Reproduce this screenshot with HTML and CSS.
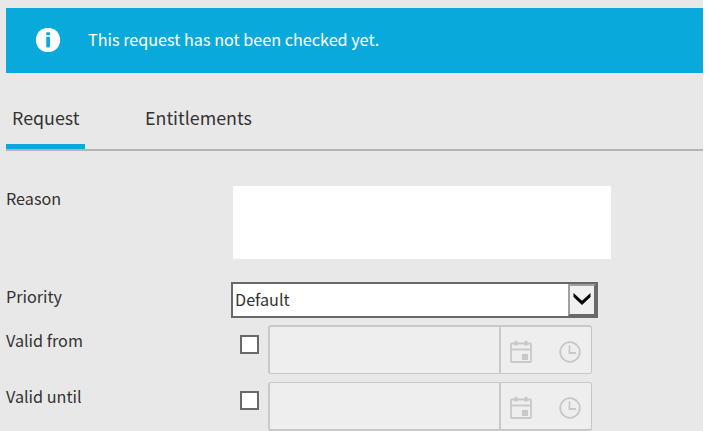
FILE: index.html
```
<!DOCTYPE html>
<html lang="en">
<head>
  <meta charset="UTF-8">
  <meta name="viewport" content="width=device-width, initial-scale=1.0">
  <title>Request</title>
  <link rel="stylesheet" href="styles.css">
</head>
<body>
  <div class="panel">
    <div class="banner">
      <svg class="banner-icon" viewBox="0 0 24 24">
        <circle cx="12" cy="12" r="12.2" fill="#fff"/>
        <rect x="10.2" y="4.2" width="3.8" height="3" rx="0.8" fill="#09a9dc"/>
        <rect x="10.2" y="8.8" width="3.8" height="10.6" rx="0.8" fill="#09a9dc"/>
      </svg>
      <span class="banner-text">This request has not been checked yet.</span>
    </div>

    <div class="tabs">
      <div class="tab active">Request</div>
      <div class="tab">Entitlements</div>
    </div>

    <div class="form">
      <div class="row row-reason">
        <label class="label" for="reason">Reason</label>
        <textarea id="reason" class="reason"></textarea>
      </div>

      <div class="row row-priority">
        <span class="label">Priority</span>
        <div class="select">
          <span class="select-value">Default</span>
          <span class="select-button">
            <svg class="select-arrow" viewBox="0 0 18 12">
              <path d="M0.5 0V4L9 11.9L17.5 4V0L9 7.7Z"/>
            </svg>
          </span>
        </div>
      </div>

      <div class="row row-from">
        <label class="label" for="validFrom">Valid from</label>
        <input type="checkbox" id="validFrom" class="check">
        <div class="datetime">
          <div class="date-value"></div>
          <div class="pickers">
            <svg class="icon" viewBox="0 0 22 22">
              <rect x="1" y="2.5" width="20" height="18.5" rx="1"/>
              <path d="M1 8.5H21"/>
              <path class="rings" d="M6 0V4.5M16 0V4.5"/>
              <rect class="solid" x="12" y="13" width="6" height="6"/>
            </svg>
            <svg class="icon" viewBox="0 0 22 22">
              <circle cx="11" cy="11" r="9.8"/>
              <path d="M10.5 4.5V12H17"/>
            </svg>
          </div>
        </div>
      </div>

      <div class="row row-until">
        <label class="label" for="validUntil">Valid until</label>
        <input type="checkbox" id="validUntil" class="check">
        <div class="datetime">
          <div class="date-value"></div>
          <div class="pickers">
            <svg class="icon" viewBox="0 0 22 22">
              <rect x="1" y="2.5" width="20" height="18.5" rx="1"/>
              <path d="M1 8.5H21"/>
              <path class="rings" d="M6 0V4.5M16 0V4.5"/>
              <rect class="solid" x="12" y="13" width="6" height="6"/>
            </svg>
            <svg class="icon" viewBox="0 0 22 22">
              <circle cx="11" cy="11" r="9.8"/>
              <path d="M10.5 4.5V12H17"/>
            </svg>
          </div>
        </div>
      </div>
    </div>
  </div>
</body>
</html>
```
FILE: styles.css
```
* {
  box-sizing: border-box;
}

body {
  margin: 0;
  background: #fff;
  color: #333;
  font-family: "Noto Sans CJK SC", "Noto Sans", sans-serif;
  font-size: 16.2px;
  line-height: 24px;
  overflow: hidden;
}

.panel {
  width: 703px;
  height: 431px;
  padding: 8px 0 0 6px;
  background: #e8e8e8;
  overflow: hidden;
}

.banner {
  display: flex;
  align-items: center;
  gap: 28px;
  height: 65px;
  padding: 0 0 2px 30px;
  background: #09a9dc;
  color: #fff;
}

.banner-icon {
  width: 24px;
  height: 24px;
}

.banner-text {
  padding-bottom: 1px;
}

.tabs {
  display: flex;
  gap: 54px;
  height: 78px;
  padding-top: 31px;
  border-bottom: 2px solid #b3b3b3;
  font-size: 17.85px;
}

.tab {
  height: 45px;
  padding: 0 6px;
  line-height: 26px;
}

.tab.active {
  width: 79px;
  border-bottom: 5px solid #09a9dc;
}

.form {
  padding-top: 35px;
}

.row {
  display: flex;
  align-items: flex-start;
}

.label {
  width: 225px;
  flex-shrink: 0;
}

.row-reason {
  height: 96px;
}

.reason {
  width: 378px;
  height: 73px;
  margin-left: 2px;
  padding: 4px;
  border: none;
  background: #fff;
  resize: none;
}

.row-priority {
  height: 43px;
}

.row-priority .label {
  padding-top: 2px;
}

.select {
  display: flex;
  justify-content: space-between;
  width: 367px;
  height: 36px;
  border: 2px solid #696969;
  background: #fff;
}

.select-value {
  padding-left: 2px;
  line-height: 31px;
}

.select-button {
  display: flex;
  align-items: center;
  justify-content: center;
  width: 28px;
  padding-bottom: 2px;
  border: 2px solid;
  border-color: #a0a0a0 #696969 #696969 #a0a0a0;
  background: #f0f0f0;
}

.select-arrow {
  width: 18px;
  height: 12px;
  fill: #000;
}

.row-from {
  height: 57px;
}

.row-from .label {
  padding-top: 3px;
}

.row-until .label {
  padding-top: 2px;
}

.check {
  appearance: none;
  width: 19px;
  height: 19px;
  margin: 10px 9px 0;
  border: 2px solid #696969;
  background: #fff;
}

.row-until .check {
  margin-top: 9px;
}

.datetime {
  display: flex;
  width: 324px;
  height: 49px;
  border: 1px solid #c8c8c8;
  border-width: 2px 1px 1px 2px;
  border-radius: 3px;
  background: #eee;
}

.row-until .datetime {
  border-width: 1px 1px 2px 2px;
}

.date-value {
  width: 231px;
  border-right: 2px solid #c8c8c8;
}

.pickers {
  display: flex;
  align-items: center;
  gap: 27px;
  padding: 3px 0 0 9px;
}

.row-until .pickers {
  padding-top: 4px;
}

.icon {
  width: 22px;
  height: 22px;
  fill: none;
  stroke: #c8c8c8;
  stroke-width: 1.8;
}

.icon .rings {
  stroke-width: 3;
}

.icon .solid {
  fill: #c8c8c8;
  stroke: none;
}
```
